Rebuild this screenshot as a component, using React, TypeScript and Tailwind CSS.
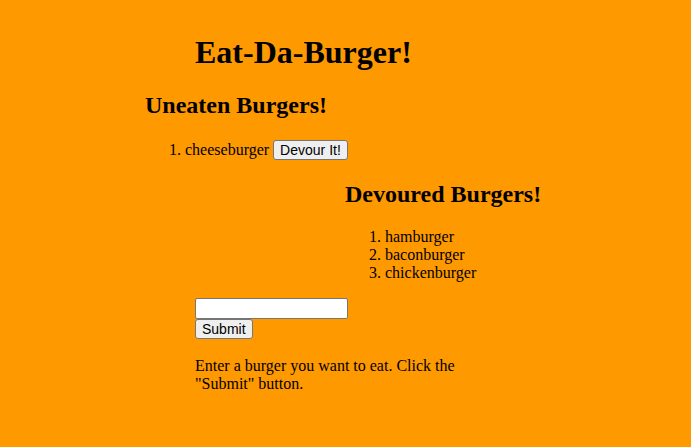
const SERIF = "font-['Liberation_Serif','Times_New_Roman',serif]";

const BTN =
  "inline-block h-[20px] px-[6px] bg-[#efefef] border border-[#767676] rounded-[3px] text-[14px] leading-[16px] text-black font-['Liberation_Sans',Arial,sans-serif] align-baseline";

const uneaten = ["cheeseburger"];
const devoured = ["hamburger", "baconburger", "chickenburger"];

export default function App() {
  return (
    <div className={`min-h-screen w-full bg-[#ff9900] text-black ${SERIF} text-[16px] leading-[normal] flex flex-col items-start`}>
      <h1 className="mt-[34px] ml-[195px] text-[32px] font-bold leading-[normal]">Eat-Da-Burger!</h1>

      <h2 className="mt-[21px] ml-[145px] text-[24px] font-bold leading-[normal]">Uneaten Burgers!</h2>
      <ol className="mt-[21px] ml-[145px] pl-[40px] list-decimal">
        {uneaten.map((b) => (
          <li key={b}>
            {b}{" "}
            <button className={BTN}>Devour It!</button>
          </li>
        ))}
      </ol>

      <h2 className="mt-[21px] ml-[345px] text-[24px] font-bold leading-[normal]">Devoured Burgers!</h2>
      <ol className="mt-[20px] ml-[345px] pl-[40px] list-decimal">
        {devoured.map((b) => (
          <li key={b}>{b}</li>
        ))}
      </ol>

      <form className="mt-[16px] ml-[195px] flex flex-col items-start">
        <input
          type="text"
          className="w-[153px] h-[21px] bg-white border border-[#767676] rounded-[2px] px-[2px] text-[13.33px] font-['Liberation_Sans',Arial,sans-serif]"
        />
        <button type="button" className={BTN}>Submit</button>
      </form>

      <p className="mt-[18px] ml-[195px] w-[300px]">
        Enter a burger you want to eat. Click the "Submit" button.
      </p>
    </div>
  );
}
